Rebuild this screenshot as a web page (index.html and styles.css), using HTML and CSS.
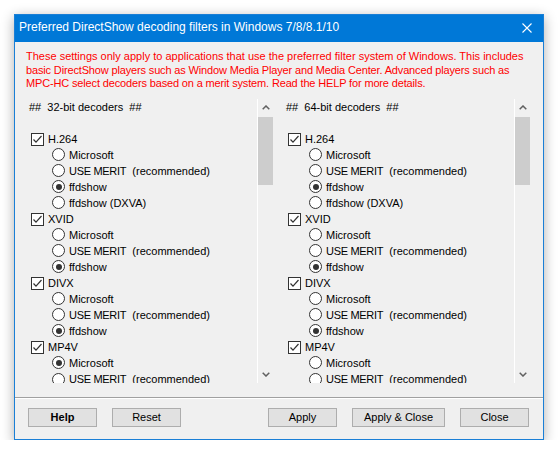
FILE: index.html
```html
<!DOCTYPE html>
<html>
<head>
<meta charset="utf-8">
<title>Preferred DirectShow decoding filters</title>
<link rel="stylesheet" href="styles.css">
</head>
<body>
<div class="window">
  <div class="titlebar">
    <span class="title">Preferred DirectShow decoding filters in Windows 7/8/8.1/10</span>
    <svg class="close" width="10" height="10" viewBox="0 0 10 10"><path d="M0.5 0.5 L9.5 9.5 M9.5 0.5 L0.5 9.5" stroke="#fff" stroke-width="1.1" fill="none"/></svg>
  </div>
  <div class="client">
    <p class="note"><span class="l1">These settings only apply to applications that use the preferred filter system of Windows. This includes</span><br><span class="l2">basic DirectShow players such as Window Media Player and Media Center. Advanced players such as</span><br><span class="l2">MPC-HC select decoders based on a merit system. Read the HELP for more details.</span></p>
    <div class="panes">
      <div class="pane">
        <div class="list">
          <div class="row head">##  32-bit decoders  ##</div>
          <div class="row blank"></div>
          <div class="row chk"><span class="cb"><svg viewBox="0 0 13 13" width="13" height="13"><path d="M2.5 6.5 L5 9.2 L10.5 3" stroke="#333" stroke-width="1.2" fill="none"/></svg></span>H.264</div>
          <div class="row opt"><span class="rb"></span>Microsoft</div>
          <div class="row opt"><span class="rb"></span><span class="caps">USE MERIT</span>  (recommended)</div>
          <div class="row opt"><span class="rb on"></span>ffdshow</div>
          <div class="row opt"><span class="rb"></span>ffdshow (DXVA)</div>
          <div class="row chk"><span class="cb"><svg viewBox="0 0 13 13" width="13" height="13"><path d="M2.5 6.5 L5 9.2 L10.5 3" stroke="#333" stroke-width="1.2" fill="none"/></svg></span>XVID</div>
          <div class="row opt"><span class="rb"></span>Microsoft</div>
          <div class="row opt"><span class="rb"></span><span class="caps">USE MERIT</span>  (recommended)</div>
          <div class="row opt"><span class="rb on"></span>ffdshow</div>
          <div class="row chk"><span class="cb"><svg viewBox="0 0 13 13" width="13" height="13"><path d="M2.5 6.5 L5 9.2 L10.5 3" stroke="#333" stroke-width="1.2" fill="none"/></svg></span>DIVX</div>
          <div class="row opt"><span class="rb"></span>Microsoft</div>
          <div class="row opt"><span class="rb"></span><span class="caps">USE MERIT</span>  (recommended)</div>
          <div class="row opt"><span class="rb on"></span>ffdshow</div>
          <div class="row chk"><span class="cb"><svg viewBox="0 0 13 13" width="13" height="13"><path d="M2.5 6.5 L5 9.2 L10.5 3" stroke="#333" stroke-width="1.2" fill="none"/></svg></span>MP4V</div>
          <div class="row opt"><span class="rb on"></span>Microsoft</div>
          <div class="row opt last"><span class="rb"></span><span class="caps">USE MERIT</span>  (recommended)</div>
        </div>
        <div class="scrollbar">
          <div class="arrow"><svg width="8" height="5" viewBox="0 0 8 5"><path d="M0.7 4.3 L4 1 L7.3 4.3" stroke="#606060" stroke-width="1.5" fill="none"/></svg></div>
          <div class="track"><div class="thumb"></div></div>
          <div class="arrow"><svg width="8" height="5" viewBox="0 0 8 5"><path d="M0.7 0.7 L4 4 L7.3 0.7" stroke="#606060" stroke-width="1.5" fill="none"/></svg></div>
        </div>
      </div>
      <div class="pane">
        <div class="list">
          <div class="row head">##  64-bit decoders  ##</div>
          <div class="row blank"></div>
          <div class="row chk"><span class="cb"><svg viewBox="0 0 13 13" width="13" height="13"><path d="M2.5 6.5 L5 9.2 L10.5 3" stroke="#333" stroke-width="1.2" fill="none"/></svg></span>H.264</div>
          <div class="row opt"><span class="rb"></span>Microsoft</div>
          <div class="row opt"><span class="rb"></span><span class="caps">USE MERIT</span>  (recommended)</div>
          <div class="row opt"><span class="rb on"></span>ffdshow</div>
          <div class="row opt"><span class="rb"></span>ffdshow (DXVA)</div>
          <div class="row chk"><span class="cb"><svg viewBox="0 0 13 13" width="13" height="13"><path d="M2.5 6.5 L5 9.2 L10.5 3" stroke="#333" stroke-width="1.2" fill="none"/></svg></span>XVID</div>
          <div class="row opt"><span class="rb"></span>Microsoft</div>
          <div class="row opt"><span class="rb"></span><span class="caps">USE MERIT</span>  (recommended)</div>
          <div class="row opt"><span class="rb on"></span>ffdshow</div>
          <div class="row chk"><span class="cb"><svg viewBox="0 0 13 13" width="13" height="13"><path d="M2.5 6.5 L5 9.2 L10.5 3" stroke="#333" stroke-width="1.2" fill="none"/></svg></span>DIVX</div>
          <div class="row opt"><span class="rb"></span>Microsoft</div>
          <div class="row opt"><span class="rb"></span><span class="caps">USE MERIT</span>  (recommended)</div>
          <div class="row opt"><span class="rb on"></span>ffdshow</div>
          <div class="row chk"><span class="cb"><svg viewBox="0 0 13 13" width="13" height="13"><path d="M2.5 6.5 L5 9.2 L10.5 3" stroke="#333" stroke-width="1.2" fill="none"/></svg></span>MP4V</div>
          <div class="row opt"><span class="rb"></span>Microsoft</div>
          <div class="row opt last"><span class="rb"></span><span class="caps">USE MERIT</span>  (recommended)</div>
        </div>
        <div class="scrollbar">
          <div class="arrow"><svg width="8" height="5" viewBox="0 0 8 5"><path d="M0.7 4.3 L4 1 L7.3 4.3" stroke="#606060" stroke-width="1.5" fill="none"/></svg></div>
          <div class="track"><div class="thumb"></div></div>
          <div class="arrow"><svg width="8" height="5" viewBox="0 0 8 5"><path d="M0.7 0.7 L4 4 L7.3 0.7" stroke="#606060" stroke-width="1.5" fill="none"/></svg></div>
        </div>
      </div>
    </div>
    <div class="sep"></div>
    <div class="buttons">
      <button class="btn bold">Help</button>
      <button class="btn">Reset</button>
      <span class="spacer"></span>
      <button class="btn">Apply</button>
      <button class="btn wide">Apply &amp; Close</button>
      <button class="btn">Close</button>
    </div>
  </div>
</div>
</body>
</html>
```
FILE: styles.css
```css
html, body {
  margin: 0;
  padding: 0;
  background: #ffffff;
}
body {
  font-family: "Liberation Sans", Arial, sans-serif;
  font-size: 11px;
  color: #000;
}
.window {
  box-sizing: border-box;
  margin: 14px 0 0 14px;
  width: 530px;
  height: 426px;
  border: 1px solid #1a7fd6;
  background: #f0f0f0;
  display: flex;
  flex-direction: column;
  box-shadow: 0 3px 12px rgba(0, 0, 0, 0.32);
}
.titlebar {
  height: 27px;
  flex: none;
  background: #0078d7;
  color: #fff;
  display: flex;
  align-items: center;
  padding-left: 4px;
  padding-right: 11px;
  padding-bottom: 3px;
  box-sizing: border-box;
  font-size: 12px;
}
.title {
  flex: 1;
  white-space: nowrap;
}
.close {
  display: block;
  margin-top: 2px;
}
.client {
  flex: 1;
  display: flex;
  flex-direction: column;
}
.note {
  margin: 8px 0 0 0;
  padding-left: 11px;
  color: #ff0000;
  line-height: 13.5px;
  white-space: nowrap;
}
.l2 {
  letter-spacing: -0.15px;
}
.panes {
  display: flex;
  margin-top: 8px;
  margin-left: 7px;
  height: 284px;
}
.pane {
  width: 257px;
  display: flex;
}
.list {
  width: 235px;
  overflow: hidden;
}
.row {
  height: 16px;
  line-height: 16px;
  white-space: pre;
  display: flex;
  align-items: center;
  flex: none;
}
.row.last {
  height: 13px;
  align-items: flex-start;
  overflow: hidden;
}
.row.last .rb {
  margin-top: 2px;
}
.caps {
  letter-spacing: -0.3px;
}
.head {
  padding-left: 7px;
}
.blank {
  height: 16px;
}
.chk {
  padding-left: 9px;
}
.opt {
  padding-left: 30px;
}
.cb {
  box-sizing: border-box;
  width: 13px;
  height: 13px;
  border: 1px solid #333;
  background: #fff;
  margin-right: 4px;
  margin-top: 2px;
  flex: none;
}
.cb svg {
  display: block;
  margin: -1px 0 0 -1px;
}
.rb {
  box-sizing: border-box;
  width: 13px;
  height: 13px;
  border: 1px solid #333;
  border-radius: 50%;
  background: #fff;
  margin-right: 4px;
  flex: none;
  display: flex;
  align-items: center;
  justify-content: center;
}
.rb.on::after {
  content: "";
  width: 6px;
  height: 6px;
  border-radius: 50%;
  background: #333;
}
.scrollbar {
  width: 17px;
  box-sizing: border-box;
  border-left: 1px solid #fff;
  display: flex;
  flex-direction: column;
}
.arrow {
  height: 17px;
  display: flex;
  align-items: center;
  justify-content: center;
  flex: none;
}
.track {
  flex: 1;
  padding-top: 1px;
}
.thumb {
  width: 15px;
  height: 68px;
  background: #cdcdcd;
}
.sep {
  margin-top: 14px;
  height: 1px;
  background: #a0a0a0;
  border-bottom: 1px solid #fff;
}
.buttons {
  display: flex;
  margin-top: 9px;
  padding: 0 14px 0 13px;
  gap: 15px;
}
.spacer {
  flex: 1;
}
.btn {
  box-sizing: border-box;
  width: 69px;
  height: 19px;
  padding: 0;
  margin: 0;
  background: #e1e1e1;
  border: 1px solid #adadad;
  border-radius: 0;
  font-family: "Liberation Sans", Arial, sans-serif;
  font-size: 11px;
  color: #000;
}
.btn.wide {
  width: 93px;
}
.btn.bold {
  font-weight: bold;
}
```
